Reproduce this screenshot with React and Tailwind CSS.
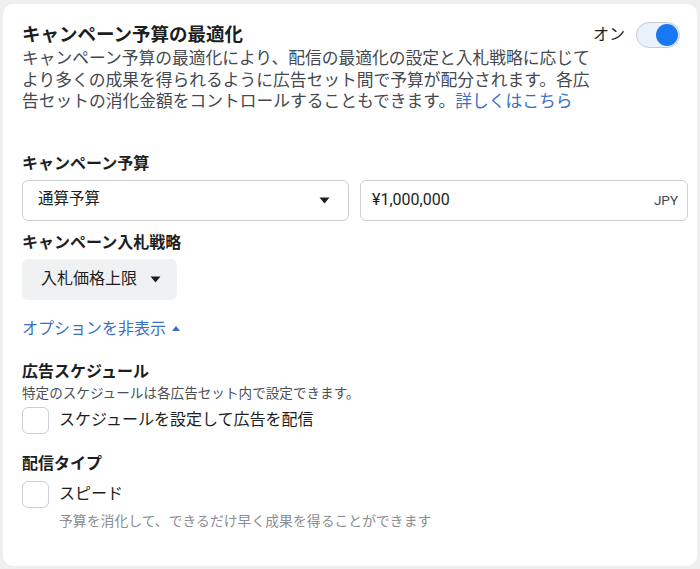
const FONT = "font-['Roboto','Noto_Sans_CJK_JP',sans-serif]";

function Caret({ up = false, className = '' }) {
  return (
    <svg width="11" height="7" viewBox="0 0 11 7" className={className}>
      {up ? <path d="M5.5 0.5 L10.5 6.5 L0.5 6.5 Z" fill="currentColor" /> : <path d="M0.5 0.5 L10.5 0.5 L5.5 6.5 Z" fill="currentColor" />}
    </svg>
  );
}

function Toggle() {
  return (
    <div className="w-[44px] h-[26px] rounded-full bg-[#e9f1fd] border border-[#c9ccd1] flex items-center justify-end pr-[1px]">
      <div className="w-[22px] h-[22px] rounded-full bg-[#1877f2]" />
    </div>
  );
}

function Checkbox() {
  return <div className="w-[27px] h-[27px] rounded-[6px] border border-[#ccd0d5] bg-white flex-shrink-0" />;
}

export default function App() {
  return (
    <div className={`w-[700px] h-[569px] bg-[#efefef] pt-[4px] pl-[3px] ${FONT}`}>
      <div className="w-[694px] h-[562px] bg-white rounded-[10px] pl-[19px] pt-[19px] text-[#1c1e21]">
        {/* Header */}
        <div className="flex">
          <div className="w-[565px] flex-shrink-0">
            <div className="text-[18.5px] leading-[24px] font-bold">キャンペーン予算の最適化</div>
            <p className="mt-[1px] text-[16.75px] leading-[21.5px] text-[#444950] whitespace-nowrap">
              キャンペーン予算の最適化により、配信の最適化の設定と入札戦略に応じて
              <br />
              より多くの成果を得られるように広告セット間で予算が配分されます。各広
              <br />
              告セットの消化金額をコントロールすることもできます。<span className="text-[#3a6fc4]">詳しくはこちら</span>
            </p>
          </div>
          <div className="ml-[6px] flex items-start gap-[11px] mt-[-1px]">
            <span className="text-[16px] leading-[26px] text-[#1c1e21]">オン</span>
            <Toggle />
          </div>
        </div>

        {/* Budget */}
        <div className="mt-[41px] text-[16px] leading-[20px] font-bold">キャンペーン予算</div>
        <div className="mt-[6px] flex gap-[11px]">
          <div className="w-[327px] h-[41px] rounded-[6px] border border-[#ccd0d5] flex items-center justify-between pl-[15px] pr-[18px]">
            <span className="text-[15.5px] text-[#1c1e21]">通算予算</span>
            <Caret className="text-[#1c1e21]" />
          </div>
          <div className="w-[328px] h-[41px] rounded-[6px] border border-[#ccd0d5] flex items-center justify-between pl-[11px] pr-[9px]">
            <span className="text-[16px] text-[#1c1e21]">¥1,000,000</span>
            <span className="text-[13.5px] text-[#444950]">JPY</span>
          </div>
        </div>

        {/* Bid strategy */}
        <div className="mt-[12px] text-[16px] leading-[20px] font-bold">キャンペーン入札戦略</div>
        <div className="mt-[6px] w-[155px] h-[41px] rounded-[6px] bg-[#f0f1f2] flex items-center pl-[19px] gap-[13px]">
          <span className="text-[16px] text-[#1c1e21]">入札価格上限</span>
          <Caret className="text-[#1c1e21]" />
        </div>

        {/* Options link */}
        <div className="mt-[19px] flex items-center gap-[6px] text-[#3a6fc4]">
          <span className="text-[16px] leading-[20px]">オプションを非表示</span>
          <svg width="8" height="5" viewBox="0 0 8 5"><path d="M4 0 L8 5 L0 5 Z" fill="currentColor" /></svg>
        </div>

        {/* Schedule */}
        <div className="mt-[23px] text-[16px] leading-[20px] font-bold">広告スケジュール</div>
        <div className="mt-[2px] text-[13.6px] leading-[18px] text-[#4b4f56]">特定のスケジュールは各広告セット内で設定できます。</div>
        <div className="mt-[5px] flex items-center gap-[10px]">
          <Checkbox />
          <span className="text-[16px] leading-[20px] text-[#1c1e21]">スケジュールを設定して広告を配信</span>
        </div>

        {/* Delivery type */}
        <div className="mt-[20px] text-[16px] leading-[20px] font-bold">配信タイプ</div>
        <div className="mt-[7px] flex items-center gap-[10px]">
          <Checkbox />
          <span className="text-[16px] leading-[20px] text-[#1c1e21]">スピード</span>
        </div>
        <div className="mt-[4px] ml-[37px] text-[13.85px] leading-[18px] text-[#8a8d91]">予算を消化して、できるだけ早く成果を得ることができます</div>
      </div>
    </div>
  );
}
